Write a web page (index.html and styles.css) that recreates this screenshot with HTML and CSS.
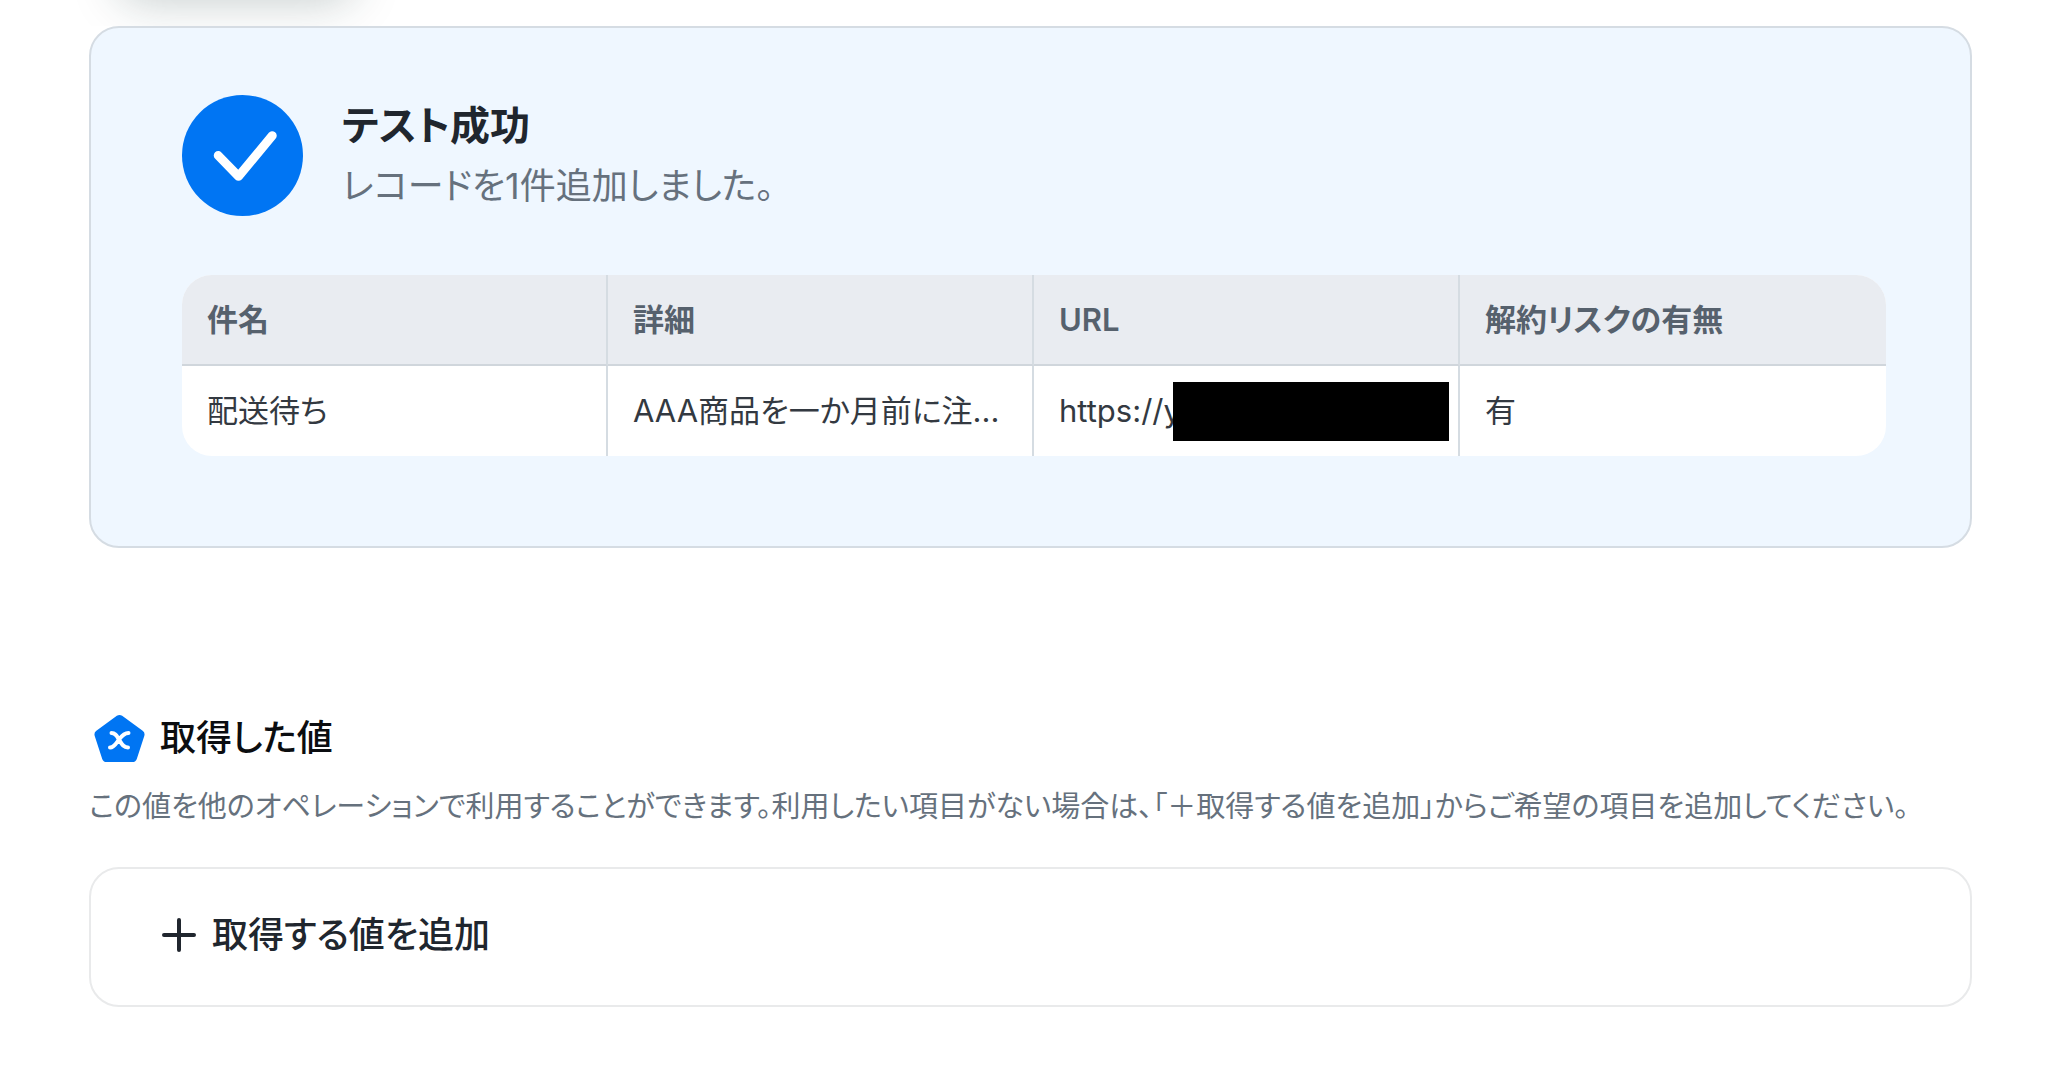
FILE: index.html
```html
<!DOCTYPE html>
<html lang="ja">
<head>
<meta charset="utf-8">
<title>テスト成功</title>
<link rel="stylesheet" href="styles.css">
</head>
<body>
<div class="topbar"><div class="floating"></div></div>
<main class="page">
  <section class="result">
    <header class="result-head">
      <svg class="check" viewBox="0 0 122 122" aria-hidden="true">
        <circle cx="61" cy="61" r="61" fill="#0075f3"/>
        <path d="M36.500 61 57 82 91 41" fill="none" stroke="#fff" stroke-width="9" stroke-linecap="round" stroke-linejoin="round"/>
      </svg>
      <div>
        <h1 class="result-title">テスト成功</h1>
        <p class="result-text">レコードを1件追加しました。</p>
      </div>
    </header>
    <table class="record">
      <thead>
        <tr><th scope="col">件名</th><th scope="col">詳細</th><th scope="col">URL</th><th scope="col">解約リスクの有無</th></tr>
      </thead>
      <tbody>
        <tr><td>配送待ち</td><td>AAA商品を一か月前に注...</td><td><div class="url">https://y<span class="mask"></span></div></td><td>有</td></tr>
      </tbody>
    </table>
  </section>
  <section class="values">
    <h2 class="values-title">
      <svg class="badge" viewBox="0 0 52 50" aria-hidden="true">
        <path d="M26.500 6.500 47 21.500 39.500 44.500H13.500L6 21.500Z" fill="#0075f3" stroke="#0075f3" stroke-width="9" stroke-linejoin="round"/>
        <path d="M18.500 20c4 0 5 2.500 7.500 6.500s4 8 9 8M35.500 20c-4 0-6.500 2.500-9.500 6.500s-5 8-9 8" fill="none" stroke="#fff" stroke-width="4" stroke-linecap="round"/>
      </svg>
      取得した値
    </h2>
    <p class="values-text">この値を他のオペレーションで利用することができます。利用したい項目がない場合は、「＋取得する値を追加」からご希望の項目を追加してください。</p>
    <div class="panel">
      <button class="add" type="button">
        <svg class="plus" viewBox="0 0 34 34" aria-hidden="true"><path d="M17 2V32M2 17H32" stroke="#20262e" stroke-width="4" stroke-linecap="round"/></svg>
        取得する値を追加
      </button>
    </div>
  </section>
</main>
</body>
</html>
```
FILE: styles.css
```css
* { box-sizing: border-box; }

body {
  margin: 0;
  background: #fff;
  color: #20262e;
  font-family: Inter, "Noto Sans CJK JP", sans-serif;
  font-feature-settings: "palt";
}

h1, h2, p { margin: 0; }

.topbar {
  height: 26px;
  padding: 0 120px;
  overflow: hidden;
}

.floating {
  width: 232px;
  height: 80px;
  margin-top: -88px;
  border-radius: 20px;
  box-shadow: 0 8px 48px rgba(20, 50, 50, 0.26);
}

.page { padding: 0 76px 60px 89px; }

.result {
  padding: 67px 84px 90px 91px;
  border: 2px solid #d5dce3;
  border-radius: 30px;
  background: #eff7ff;
}

.result-head {
  display: flex;
  align-items: center;
  gap: 39px;
  margin-bottom: 59px;
}

.check { width: 121px; height: 121px; flex: none; }

.result-title { font-size: 40px; line-height: 60px; font-weight: 600; }
.result-text { font-size: 36px; line-height: 60px; color: #66717d; }

.record {
  width: 100%;
  table-layout: fixed;
  border-collapse: separate;
  border-spacing: 0;
  border-radius: 30px;
  overflow: hidden;
  background: #fff;
  font-size: 31px;
  line-height: 40px;
  text-align: left;
}

.record th, .record td {
  height: 90px;
  padding: 0 25px;
  border-right: 2px solid #d5dce2;
  white-space: nowrap;
}

.record th {
  height: 91px;
  border-bottom: 2px solid #d0d6dc;
  background: #e9ecf1;
  color: #56616d;
  font-weight: 600;
}

.record td { color: #333941; }
.record th:last-child, .record td:last-child { border-right: 0; }

.url { display: flex; align-items: center; margin-right: -16px; }
.mask { flex: 1; height: 59px; margin-left: -8px; background: #000; }

.values { padding-top: 160px; }

.values-title {
  display: flex;
  align-items: center;
  gap: 15px;
  padding-left: 4px;
  color: #0b0d10;
  font-size: 36px;
  line-height: 60px;
  font-weight: 500;
}

.badge { width: 52px; height: 50px; }

.values-text {
  margin: 19px 0 40px;
  color: #66717d;
  font-size: 29px;
  line-height: 40px;
  white-space: nowrap;
}

.panel {
  padding: 36px 71px 40px;
  border: 2px solid #e9eaeb;
  border-radius: 30px;
}

.add {
  display: flex;
  align-items: center;
  gap: 16px;
  padding: 0;
  border: 0;
  background: none;
  color: inherit;
  font: inherit;
  font-feature-settings: inherit;
  font-size: 36px;
  line-height: 60px;
  font-weight: 500;
}

.plus { width: 34px; height: 34px; }
```
